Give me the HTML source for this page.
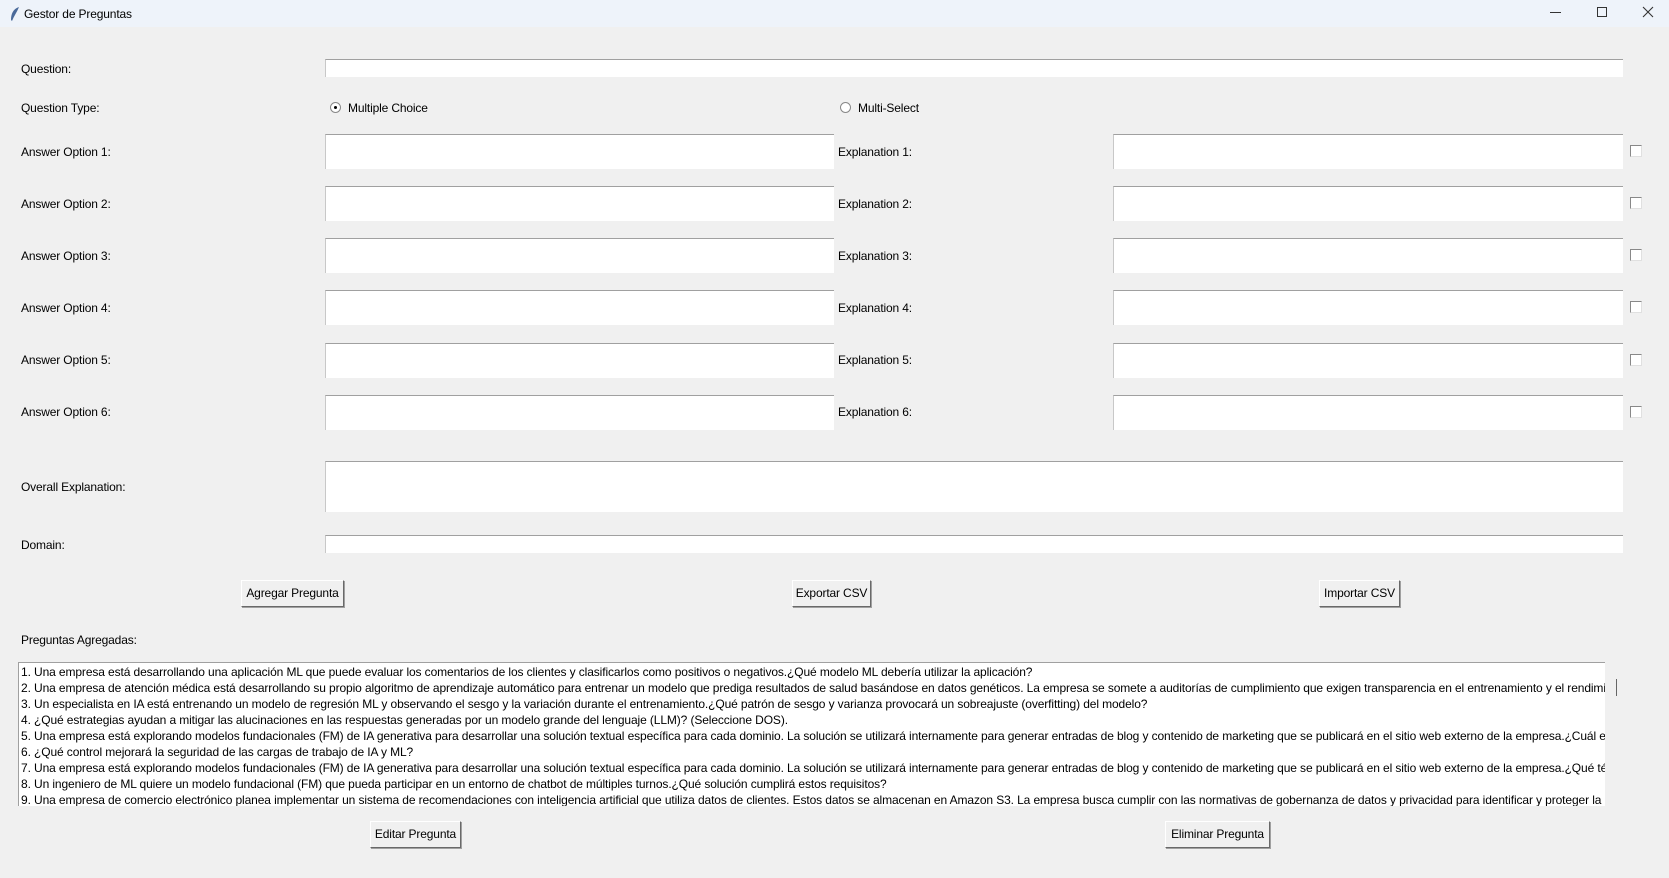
<!DOCTYPE html>
<html><head><meta charset="utf-8"><style>
*{margin:0;padding:0;box-sizing:border-box}
body{width:1669px;height:878px;background:#f0f0f0;font-family:"Liberation Sans",sans-serif;font-size:12px;letter-spacing:-0.15px;color:#000;position:relative;overflow:hidden}
.a{position:absolute;white-space:nowrap}
.tb{position:absolute;left:0;top:0;width:1669px;height:27px;background:#eef3fa}
.e{position:absolute;background:#fff;border-top:1px solid #a0a0a0;border-left:1px solid #c8c8c8}
.l{position:absolute;left:21px;transform:translateY(-50%);white-space:nowrap}
.cb{position:absolute;width:12px;height:12px;background:#fff;border-top:1px solid #888;border-left:1px solid #888;border-right:1px solid #e0e0e0;border-bottom:1px solid #e0e0e0}
.btn{position:absolute;background:#f0f0f0;border:1px solid #fff;border-right-color:#696969;border-bottom-color:#696969;box-shadow:1px 1px 0 #a0a0a0;text-align:center;font-size:12px;line-height:25px;white-space:nowrap}
.lb{position:absolute;left:18px;top:662px;width:1587px;height:144px;background:#fff;border-top:1px solid #a0a0a0;border-left:1px solid #a0a0a0;overflow:hidden;padding:1px 0 0 2px}
.lb div{white-space:nowrap;line-height:16px;font-size:12px;letter-spacing:-0.11px}
</style></head><body>
<div class="tb"></div>
<svg class="a" style="left:9px;top:6px" width="12" height="16" viewBox="0 0 12 16"><path d="M10 1 C4 3 2 8 2 14 L3 15 C5 10 8 6 10 1Z" fill="#4a6a9a"/></svg>
<div class="a" style="left:24px;top:7px;font-size:12px">Gestor de Preguntas</div>
<div class="a" style="left:1550px;top:12px;width:11px;height:1px;background:#333"></div>
<div class="a" style="left:1597px;top:7px;width:10px;height:10px;border:1px solid #333"></div>
<svg class="a" style="left:1642px;top:6px" width="12" height="12"><path d="M1 1L11 11M11 1L1 11" stroke="#333" stroke-width="1.1"/></svg>

<div class="l" style="top:69px">Question:</div>
<div class="e" style="left:325px;top:59px;width:1298px;height:18px"></div>
<div class="l" style="top:108px">Question Type:</div>
<div class="a" style="left:330px;top:102px;width:11px;height:11px;border-radius:50%;background:#fff;border:1px solid #888"><div style="position:absolute;left:3px;top:3px;width:3px;height:3px;border-radius:50%;background:#000"></div></div>
<div class="a" style="left:348px;top:101px">Multiple Choice</div>
<div class="a" style="left:840px;top:102px;width:11px;height:11px;border-radius:50%;background:#fff;border:1px solid #888"></div>
<div class="a" style="left:858px;top:101px">Multi-Select</div>

<div class="l" style="top:152px">Answer Option 1:</div>
<div class="e" style="left:325px;top:134px;width:509px;height:35px"></div>
<div class="a" style="left:838px;top:145px">Explanation 1:</div>
<div class="e" style="left:1113px;top:134px;width:510px;height:35px"></div>
<div class="cb" style="left:1630px;top:145px"></div>

<div class="l" style="top:204px">Answer Option 2:</div>
<div class="e" style="left:325px;top:186px;width:509px;height:35px"></div>
<div class="a" style="left:838px;top:197px">Explanation 2:</div>
<div class="e" style="left:1113px;top:186px;width:510px;height:35px"></div>
<div class="cb" style="left:1630px;top:197px"></div>

<div class="l" style="top:256px">Answer Option 3:</div>
<div class="e" style="left:325px;top:238px;width:509px;height:35px"></div>
<div class="a" style="left:838px;top:249px">Explanation 3:</div>
<div class="e" style="left:1113px;top:238px;width:510px;height:35px"></div>
<div class="cb" style="left:1630px;top:249px"></div>

<div class="l" style="top:308px">Answer Option 4:</div>
<div class="e" style="left:325px;top:290px;width:509px;height:35px"></div>
<div class="a" style="left:838px;top:301px">Explanation 4:</div>
<div class="e" style="left:1113px;top:290px;width:510px;height:35px"></div>
<div class="cb" style="left:1630px;top:301px"></div>

<div class="l" style="top:360px">Answer Option 5:</div>
<div class="e" style="left:325px;top:343px;width:509px;height:35px"></div>
<div class="a" style="left:838px;top:353px">Explanation 5:</div>
<div class="e" style="left:1113px;top:343px;width:510px;height:35px"></div>
<div class="cb" style="left:1630px;top:354px"></div>

<div class="l" style="top:412px">Answer Option 6:</div>
<div class="e" style="left:325px;top:395px;width:509px;height:35px"></div>
<div class="a" style="left:838px;top:405px">Explanation 6:</div>
<div class="e" style="left:1113px;top:395px;width:510px;height:35px"></div>
<div class="cb" style="left:1630px;top:406px"></div>

<div class="l" style="top:487px">Overall Explanation:</div>
<div class="e" style="left:325px;top:461px;width:1298px;height:51px"></div>
<div class="l" style="top:545px">Domain:</div>
<div class="e" style="left:325px;top:535px;width:1298px;height:18px"></div>

<div class="btn" style="left:241px;top:580px;width:103px;height:27px">Agregar Pregunta</div>
<div class="btn" style="left:792px;top:580px;width:79px;height:27px">Exportar CSV</div>
<div class="btn" style="left:1319px;top:580px;width:81px;height:27px">Importar CSV</div>

<div class="l" style="top:640px">Preguntas Agregadas:</div>
<div class="lb">
<div>1. Una empresa está desarrollando una aplicación ML que puede evaluar los comentarios de los clientes y clasificarlos como positivos o negativos.¿Qué modelo ML debería utilizar la aplicación?</div>
<div>2. Una empresa de atención médica está desarrollando su propio algoritmo de aprendizaje automático para entrenar un modelo que prediga resultados de salud basándose en datos genéticos. La empresa se somete a auditorías de cumplimiento que exigen transparencia en el entrenamiento y el rendimiento</div>
<div>3. Un especialista en IA está entrenando un modelo de regresión ML y observando el sesgo y la variación durante el entrenamiento.¿Qué patrón de sesgo y varianza provocará un sobreajuste (overfitting) del modelo?</div>
<div>4. ¿Qué estrategias ayudan a mitigar las alucinaciones en las respuestas generadas por un modelo grande del lenguaje (LLM)? (Seleccione DOS).</div>
<div>5. Una empresa está explorando modelos fundacionales (FM) de IA generativa para desarrollar una solución textual específica para cada dominio. La solución se utilizará internamente para generar entradas de blog y contenido de marketing que se publicará en el sitio web externo de la empresa.¿Cuál es la solución</div>
<div>6. ¿Qué control mejorará la seguridad de las cargas de trabajo de IA y ML?</div>
<div>7. Una empresa está explorando modelos fundacionales (FM) de IA generativa para desarrollar una solución textual específica para cada dominio. La solución se utilizará internamente para generar entradas de blog y contenido de marketing que se publicará en el sitio web externo de la empresa.¿Qué técnica debe</div>
<div>8. Un ingeniero de ML quiere un modelo fundacional (FM) que pueda participar en un entorno de chatbot de múltiples turnos.¿Qué solución cumplirá estos requisitos?</div>
<div>9. Una empresa de comercio electrónico planea implementar un sistema de recomendaciones con inteligencia artificial que utiliza datos de clientes. Estos datos se almacenan en Amazon S3. La empresa busca cumplir con las normativas de gobernanza de datos y privacidad para identificar y proteger la información</div>
</div>
<div class="a" style="left:1616px;top:679px;width:1px;height:17px;background:#666"></div>

<div class="btn" style="left:370px;top:821px;width:91px;height:27px">Editar Pregunta</div>
<div class="btn" style="left:1165px;top:821px;width:105px;height:27px">Eliminar Pregunta</div>
</body></html>
